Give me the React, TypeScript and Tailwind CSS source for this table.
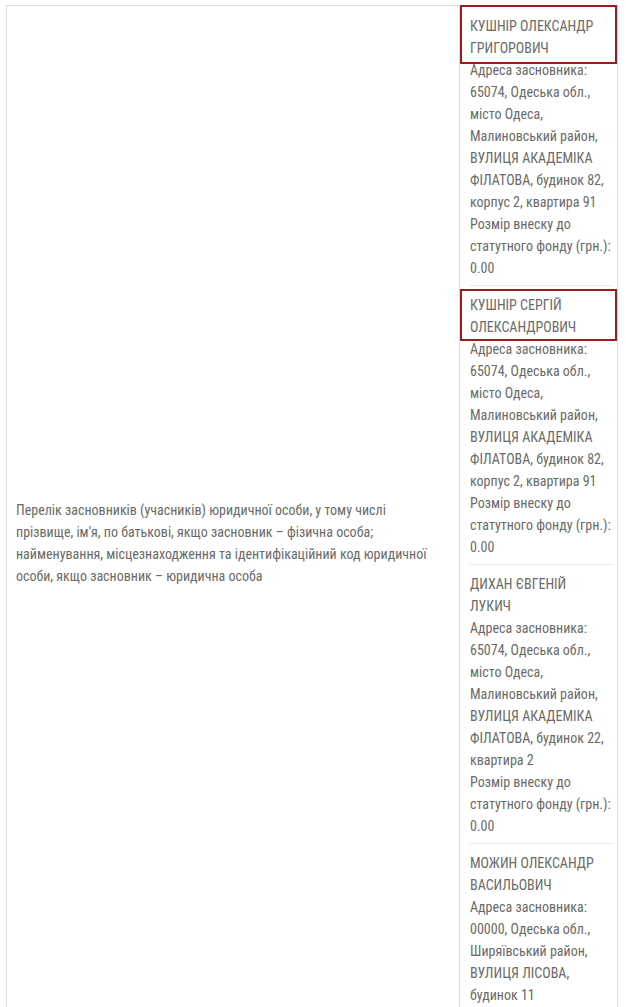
import React from 'react'

type Founder = {
  name: string
  address: string
  share: string
  box?: string
}

const founders: Founder[] = [
  {
    name: 'КУШНІР ОЛЕКСАНДР ГРИГОРОВИЧ',
    address:
      '65074, Одеська обл., місто Одеса, Малиновський район, ВУЛИЦЯ АКАДЕМІКА ФІЛАТОВА, будинок 82, корпус 2, квартира 91',
    share: '0.00',
    box: 'top-[-10px] bottom-[-5px] left-[-10px] right-[-5px]',
  },
  {
    name: 'КУШНІР СЕРГІЙ ОЛЕКСАНДРОВИЧ',
    address:
      '65074, Одеська обл., місто Одеса, Малиновський район, ВУЛИЦЯ АКАДЕМІКА ФІЛАТОВА, будинок 82, корпус 2, квартира 91',
    share: '0.00',
    box: 'top-[-5px] bottom-[-3px] left-[-10px] right-[-5px]',
  },
  {
    name: 'ДИХАН ЄВГЕНІЙ ЛУКИЧ',
    address:
      '65074, Одеська обл., місто Одеса, Малиновський район, ВУЛИЦЯ АКАДЕМІКА ФІЛАТОВА, будинок 22, квартира 2',
    share: '0.00',
  },
  {
    name: 'МОЖИН ОЛЕКСАНДР ВАСИЛЬОВИЧ',
    address: '00000, Одеська обл., Ширяївський район, ВУЛИЦЯ ЛІСОВА, будинок 11',
    share: '0.00',
  },
]

export default function App() {
  return (
    <div className="min-h-screen bg-white pt-[5px] pl-[6px] font-[Roboto,sans-serif] font-stretch-condensed text-[14px] leading-[22px] text-[#6a6a6a]">
      <div className="flex w-[612px] border border-[#dddddd]">
        <div className="flex w-[453px] shrink-0 items-center border-r border-[#dddddd] pl-[9px] pr-[19px]">
          <p>
            Перелік засновників (учасників) юридичної особи, у тому числі прізвище, ім'я, по батькові, якщо
            засновник – фізична особа; найменування, місцезнаходження та ідентифікаційний код юридичної особи,
            якщо засновник – юридична особа
          </p>
        </div>
        <div className="flex-1 pl-[10px] pr-[5px] pt-[1px]">
          {founders.map((f, i) => {
            const last = i === founders.length - 1
            return (
              <div
                key={i}
                className={`pt-[8px] ${last ? 'pb-[7px]' : 'border-b border-[#e8e8e8] pb-[6px]'}`}
              >
                <div className="relative pr-[4px]">
                  {f.name}
                  {f.box && <span className={`absolute border-2 border-[#9e1b1b] ${f.box}`} />}
                </div>
                <div>Адреса засновника: {f.address}</div>
                <div>Розмір внеску до статутного фонду (грн.): {f.share}</div>
              </div>
            )
          })}
        </div>
      </div>
    </div>
  )
}
